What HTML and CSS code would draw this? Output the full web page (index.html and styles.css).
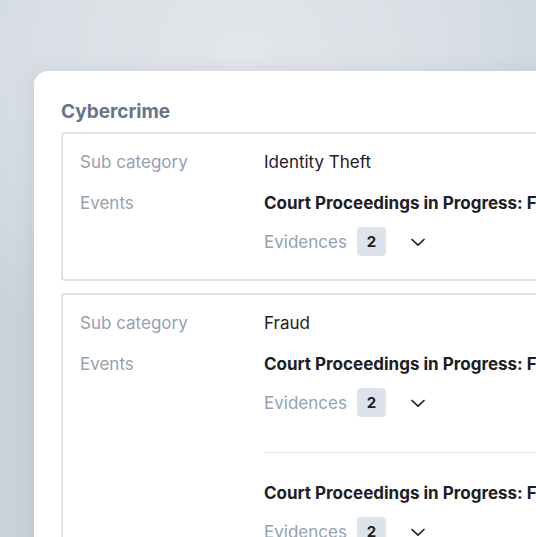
FILE: index.html
```html
<!DOCTYPE html>
<html lang="en">
<head>
  <meta charset="UTF-8" />
  <meta name="viewport" content="width=device-width, initial-scale=1.0"/>
  <title>Cybercrime</title>
  <link rel="stylesheet" href="styles.css">
</head>
<body>
  <div class="card">
    <h2 class="card-title">Cybercrime</h2>

    <div class="entry">
      <div class="label">Sub category</div>
      <div class="value">Identity Theft</div>

      <div class="label">Events</div>
      <div class="events">
        <div class="event">
          <div class="event-title">Court Proceedings in Progress: First hearing</div>
          <div class="evidence-row">
            <span class="evidence-label">Evidences</span>
            <span class="badge">2</span>
            <button class="toggle" aria-label="Show evidences">
              <svg width="16" height="16" viewBox="0 0 16 16"><path d="M2 5.5 8 11.2l6-5.7" fill="none" stroke="#1f2329" stroke-width="1.7" stroke-linecap="round" stroke-linejoin="round"/></svg>
            </button>
          </div>
        </div>
      </div>
    </div>

    <div class="entry">
      <div class="label">Sub category</div>
      <div class="value">Fraud</div>

      <div class="label">Events</div>
      <div class="events">
        <div class="event">
          <div class="event-title">Court Proceedings in Progress: First hearing</div>
          <div class="evidence-row">
            <span class="evidence-label">Evidences</span>
            <span class="badge">2</span>
            <button class="toggle" aria-label="Show evidences">
              <svg width="16" height="16" viewBox="0 0 16 16"><path d="M2 5.5 8 11.2l6-5.7" fill="none" stroke="#1f2329" stroke-width="1.7" stroke-linecap="round" stroke-linejoin="round"/></svg>
            </button>
          </div>
        </div>
        <div class="event">
          <div class="event-title">Court Proceedings in Progress: Final hearing</div>
          <div class="evidence-row">
            <span class="evidence-label">Evidences</span>
            <span class="badge">2</span>
            <button class="toggle" aria-label="Show evidences">
              <svg width="16" height="16" viewBox="0 0 16 16"><path d="M2 5.5 8 11.2l6-5.7" fill="none" stroke="#1f2329" stroke-width="1.7" stroke-linecap="round" stroke-linejoin="round"/></svg>
            </button>
          </div>
        </div>
      </div>
    </div>
  </div>
</body>
</html>
```
FILE: styles.css
```css
body {
  font-family: Inter, "Noto Sans", sans-serif;
  background: radial-gradient(ellipse 70% 60% at 45% 10%, #e3e6eb 0%, #dbe0e6 50%, #c9d3dc 100%);
  margin: 0;
  height: 537px;
  overflow: hidden;
}
.card {
  background-color: white;
  margin: 71px 0 0 34px;
  width: 640px;
  padding: 29px 27px 40px;
  border-radius: 14px;
  box-shadow: 0 2px 20px rgba(60,75,95,0.12);
  box-sizing: border-box;
}
.card-title {
  margin: 0 0 8px;
  font-size: 19px;
  font-weight: 700;
  color: #687487;
  line-height: 24px;
}
.entry {
  display: grid;
  grid-template-columns: 184px 1fr;
  row-gap: 17px;
  border: 2px solid #dfe3ea;
  border-radius: 4px;
  padding: 16px 17px 23px;
  margin-bottom: 12px;
  font-size: 17px;
  line-height: 24px;
}
.label {
  color: #95a1b2;
}
.value {
  color: #1c2026;
}
.events {
  display: flex;
  flex-direction: column;
}
.event + .event {
  margin-top: 35px;
  padding-top: 28px;
  border-top: 1px solid #e4e7ec;
}
.event-title {
  font-weight: 700;
  color: #1c2026;
  white-space: nowrap;
}
.evidence-row {
  display: flex;
  align-items: center;
  margin-top: 12px;
}
.evidence-label {
  color: #95a1b2;
}
.badge {
  margin-left: 10px;
  width: 29px;
  height: 29px;
  line-height: 29px;
  text-align: center;
  background-color: #dde3ea;
  border-radius: 4px;
  font-size: 15px;
  font-weight: 700;
  color: #1c2026;
}
.toggle {
  margin-left: 20px;
  width: 24px;
  height: 24px;
  padding: 0;
  border: none;
  background: none;
  display: flex;
  align-items: center;
  justify-content: center;
  cursor: pointer;
}
```
